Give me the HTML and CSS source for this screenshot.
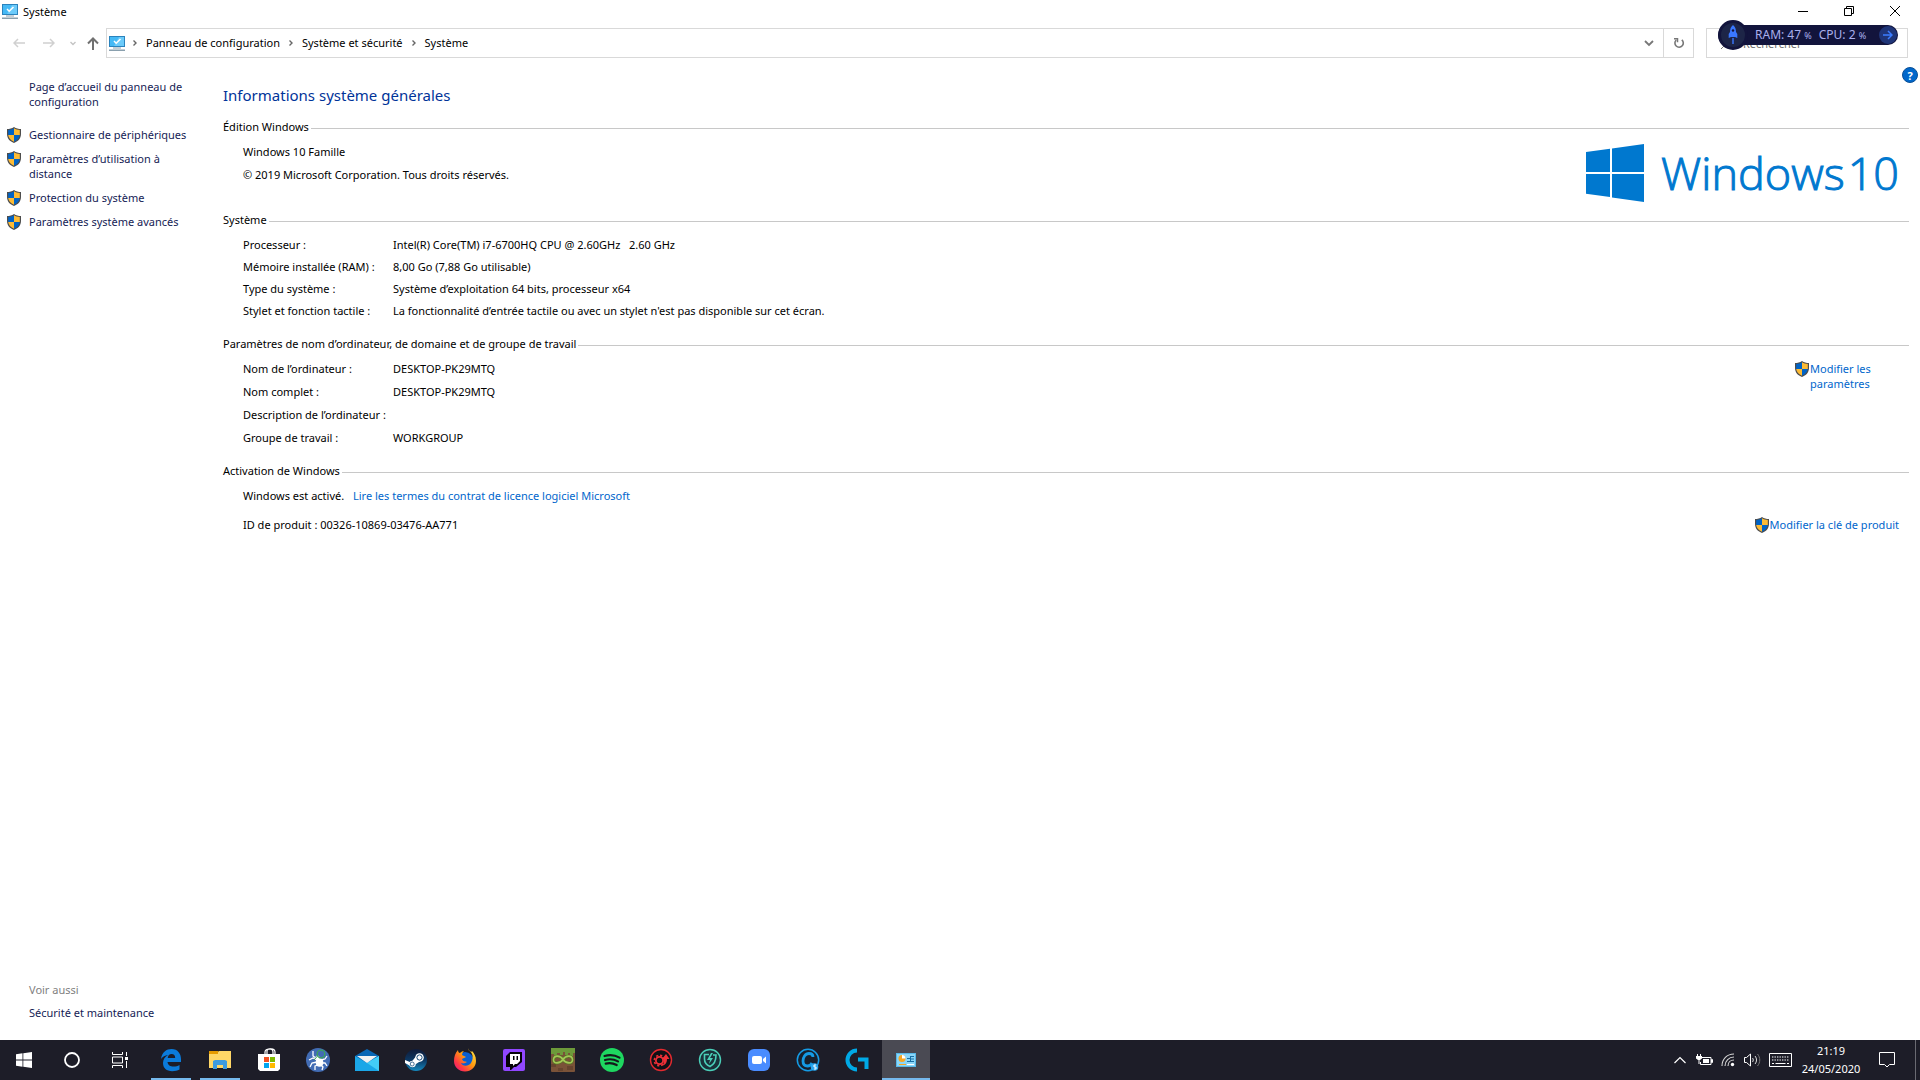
FILE: index.html
```html
<!DOCTYPE html>
<html lang="fr">
<head>
    <meta charset="UTF-8">
    <meta name="viewport" content="width=device-width, initial-scale=1.0">
    <title>Système</title>
    <link rel="stylesheet" href="styles.css">
</head>
<body>
    <!-- Shared icons -->
    <svg class="defs" aria-hidden="true">
        <symbol id="shield" viewBox="0 0 14 16">
            <path d="M7 0C5 1.600 2.500 2 0 2v5c0 4.500 3 7.500 7 9 4-1.500 7-4.500 7-9V2C11.500 2 9 1.600 7 0z" fill="#4d4d4d"/>
            <path d="M7 1.300C5.300 2.500 3.300 3 1.200 3v5H7z" fill="#0063c6"/>
            <path d="M7 1.300C8.700 2.500 10.700 3 12.800 3v5H7z" fill="#fdbb35"/>
            <path d="M1.200 8H7v6.700C3.800 13.300 1.500 11 1.200 8z" fill="#fdbb35"/>
            <path d="M12.800 8H7v6.700c3.200-1.400 5.500-3.700 5.800-6.700z" fill="#0063c6"/>
        </symbol>
        <symbol id="monitor" viewBox="0 0 16 15">
            <path d="M0 0h16v11H0z" fill="#2b83bd"/>
            <path d="M1 1h14v9H1z" fill="#45b9f5"/>
            <path d="M10 1h5v9H5z" fill="#6ccbfa"/>
            <path d="M5 5l2.200 2.200L11.500 3" fill="none" stroke="#fff" stroke-width="1.500"/>
            <path d="M4 11.500h8v1H4zM0 13.500h16V15H0z" fill="#8aa0ae"/>
        </symbol>
        <symbol id="chevron" viewBox="0 0 6 8">
            <path d="M1.500 1.500L4 4 1.500 6.500" fill="none" stroke="#666" stroke-width="1.400"/>
        </symbol>
    </svg>

    <header class="titlebar">
        <svg class="monitor"><use href="#monitor"/></svg>
        <span class="window-title">Système</span>
        <div class="window-buttons">
            <button aria-label="Réduire"><svg width="10" height="10" viewBox="0 0 10 10"><path d="M0 5.500h10" stroke="#000"/></svg></button>
            <button aria-label="Restaurer"><svg width="10" height="10" viewBox="0 0 10 10"><path d="M.5 2.500h7v7h-7zM2.500 2.500v-2h7v7h-2" fill="none" stroke="#000"/></svg></button>
            <button aria-label="Fermer"><svg width="10" height="10" viewBox="0 0 10 10"><path d="M0 0l10 10M10 0L0 10" stroke="#000"/></svg></button>
        </div>
    </header>

    <div class="toolbar">
        <div class="history">
            <button aria-label="Précédent" disabled><svg width="12" height="10" viewBox="0 0 12 10"><path d="M12 5H1M5 1L1 5l4 4" fill="none" stroke="#d0d0d0" stroke-width="1.500"/></svg></button>
            <button aria-label="Suivant" disabled><svg width="12" height="10" viewBox="0 0 12 10"><path d="M0 5h11M7 1l4 4-4 4" fill="none" stroke="#d0d0d0" stroke-width="1.500"/></svg></button>
            <button class="recent" aria-label="Emplacements récents" disabled><svg width="6" height="5" viewBox="0 0 6 5"><path d="M.5 1L3 3.500 5.500 1" fill="none" stroke="#c4c4c4" stroke-width="1.400"/></svg></button>
            <button class="up" aria-label="Dossier parent"><svg width="12" height="13" viewBox="0 0 12 13"><path d="M6 13V1.500M1 6.500l5-5 5 5" fill="none" stroke="#707070" stroke-width="2"/></svg></button>
        </div>
        <nav class="address">
            <svg class="monitor"><use href="#monitor"/></svg>
            <svg class="chevron"><use href="#chevron"/></svg>
            <a href="#">Panneau de configuration</a>
            <svg class="chevron"><use href="#chevron"/></svg>
            <a href="#">Système et sécurité</a>
            <svg class="chevron"><use href="#chevron"/></svg>
            <a href="#">Système</a>
            <button class="dropdown" aria-label="Adresses précédentes"><svg width="10" height="7" viewBox="0 0 10 7"><path d="M1 1l4 4 4-4" fill="none" stroke="#777" stroke-width="1.800"/></svg></button>
            <button class="refresh" aria-label="Actualiser"><svg width="12" height="12" viewBox="0 0 12 12"><path d="M3.200 3A4.200 4.200 0 1 0 8.800 2.800" fill="none" stroke="#777" stroke-width="1.600"/><path d="M1 1.700h3.500v3.500" fill="none" stroke="#777" stroke-width="1.500"/></svg></button>
        </nav>
        <div class="search">
            <svg width="12" height="12" viewBox="0 0 12 12"><circle cx="7" cy="5" r="4" fill="none" stroke="#777"/><path d="M4 8l-4 4" stroke="#777"/></svg>
            <input type="search" placeholder="Rechercher" aria-label="Rechercher">

            <!-- Memory widget floating over the search box -->
            <div class="booster">
                <span class="rocket">
                    <svg width="10" height="20" viewBox="0 0 10 20"><path d="M5 0C2.800 1.700 2 4 2 7L.7 9v4l2.300-1h4l2.300 1V9L8 7c0-3-.8-5.300-3-7zM4.300 13h1.400v6H4.300z" fill="#3a78ff"/><circle cx="5" cy="5.500" r="1.200" fill="#12143c"/></svg>
                </span>
                <span class="stats">RAM: 47 <small>%</small></span>
                <span class="stats">CPU: 2 <small>%</small></span>
                <button class="go" aria-label="Optimiser"><svg width="10" height="10" viewBox="0 0 10 10"><path d="M0 5h9M5 1l4 4-4 4" fill="none" stroke="#3d7dff" stroke-width="1.500"/></svg></button>
            </div>
        </div>
    </div>

    <div class="page">
        <aside class="sidebar">
            <ul class="tasks">
                <li><a href="#">Page d’accueil du panneau de configuration</a></li>
                <li><svg class="shield"><use href="#shield"/></svg><a href="#">Gestionnaire de périphériques</a></li>
                <li><svg class="shield"><use href="#shield"/></svg><a href="#">Paramètres d’utilisation à distance</a></li>
                <li><svg class="shield"><use href="#shield"/></svg><a href="#">Protection du système</a></li>
                <li><svg class="shield"><use href="#shield"/></svg><a href="#">Paramètres système avancés</a></li>
            </ul>
            <div class="see-also">
                <p>Voir aussi</p>
                <a href="#">Sécurité et maintenance</a>
            </div>
        </aside>

        <main class="content">
            <button class="help" aria-label="Aide">?</button>
            <h1>Informations système générales</h1>

            <section>
                <h2>Édition Windows</h2>
                <div class="group">
                    <div class="edition">
                        <p>Windows 10 Famille</p>
                        <p>© 2019 Microsoft Corporation. Tous droits réservés.</p>
                    </div>
                    <div class="win-logo">
                        <svg width="58" height="58" viewBox="0 0 58 58"><path d="M0 8l24-3.300V28H0zM26 4.400L58 0v28H26zM0 30h24v23L0 49.700zM26 30h32v28l-32-4.600z" fill="#0078cf"/></svg>
                        <span>Windows<b>10</b></span>
                    </div>
                </div>
            </section>

            <section>
                <h2>Système</h2>
                <div class="group">
                    <dl class="compact">
                        <dt>Processeur :</dt>
                        <dd>Intel(R) Core(TM) i7-6700HQ CPU @ 2.60GHz &nbsp; 2.60 GHz</dd>
                        <dt>Mémoire installée (RAM) :</dt>
                        <dd>8,00 Go (7,88 Go utilisable)</dd>
                        <dt>Type du système :</dt>
                        <dd>Système d’exploitation 64 bits, processeur x64</dd>
                        <dt>Stylet et fonction tactile :</dt>
                        <dd>La fonctionnalité d’entrée tactile ou avec un stylet n'est pas disponible sur cet écran.</dd>
                    </dl>
                </div>
            </section>

            <section>
                <h2>Paramètres de nom d’ordinateur, de domaine et de groupe de travail</h2>
                <div class="group">
                    <dl>
                        <dt>Nom de l’ordinateur :</dt>
                        <dd>DESKTOP-PK29MTQ</dd>
                        <dt>Nom complet :</dt>
                        <dd>DESKTOP-PK29MTQ</dd>
                        <dt>Description de l’ordinateur :</dt>
                        <dd></dd>
                        <dt>Groupe de travail :</dt>
                        <dd>WORKGROUP</dd>
                    </dl>
                    <a class="action action-narrow" href="#"><svg class="shield"><use href="#shield"/></svg><span>Modifier les paramètres</span></a>
                </div>
            </section>

            <section>
                <h2>Activation de Windows</h2>
                <div class="group activation">
                    <p>Windows est activé. <a href="#">Lire les termes du contrat de licence logiciel Microsoft</a></p>
                    <div class="product">
                        <p>ID de produit : 00326-10869-03476-AA771</p>
                        <a class="action" href="#"><svg class="shield"><use href="#shield"/></svg><span>Modifier la clé de produit</span></a>
                    </div>
                </div>
            </section>
        </main>
    </div>

    <footer class="taskbar">
        <div class="system">
            <button aria-label="Démarrer"><svg width="16" height="16" viewBox="0 0 16 16"><path d="M0 2.200L6.500 1.300V7.600H0zM7.300 1.200L16 0v7.600H7.300zM0 8.400h6.500v6.300L0 13.800zM7.300 8.400H16V16l-8.700-1.200z" fill="#fff"/></svg></button>
            <button aria-label="Cortana"><svg width="16" height="16" viewBox="0 0 16 16"><circle cx="8" cy="8" r="7" fill="none" stroke="#fff" stroke-width="1.800"/></svg></button>
            <button aria-label="Affichage des tâches"><svg width="16" height="16" viewBox="0 0 16 16"><path d="M.5 0v2.500h10V0M.5 16v-2.500h10V16M.5 5h10v6H.5zM14.500 0v4M14.500 9v7" fill="none" stroke="#fff"/><path d="M13 5h3v3h-3z" fill="#fff"/></svg></button>
        </div>
        <div class="apps">
            <button class="running" aria-label="Edge"><svg width="22" height="24" viewBox="0 0 22 24"><path d="M1 11C2 4 6.500 1 11.500 1 18 1 21 6 21 11v3H7.500c.3 3 2.800 4.600 6 4.600 2.200 0 4.300-.6 6-1.700v4.600c-2 1.100-4.500 1.700-7.300 1.700C6.500 23.200 3 20 3 15c0-3.500 2-6.500 5-8-3 .3-5.500 1.700-7 4zM7.700 9.900h7.500c0-2.400-1.300-3.900-3.600-3.900-2.200 0-3.600 1.700-3.900 3.900z" fill="#0b7bda"/></svg></button>
            <button class="running" aria-label="Explorateur de fichiers"><svg width="22" height="20" viewBox="0 0 22 20"><path d="M0 1h9l1 2H0z" fill="#e69b00"/><path d="M0 2h9l1-1h12v17H0z" fill="#ffd767"/><path d="M0 1h9v3H0z" fill="#e69b00"/><path d="M4 19v-8l2-1h10l2 1v8h-4v-4H8v4z" fill="#3d9be0"/></svg></button>
            <button aria-label="Microsoft Store"><svg width="24" height="24" viewBox="0 0 24 24"><path d="M8 8V4c0-4 8-4 8 0v4M10 6V3c0-3 8-3 8 1v3" fill="none" stroke="#fff" stroke-width="1.200"/><path d="M1 6h22v15l-2 2H3l-2-2z" fill="#fff"/><path d="M7 9h5v5H7z" fill="#f25022"/><path d="M13 9h5v5h-5z" fill="#7fba00"/><path d="M7 15h5v5H7z" fill="#00a4ef"/><path d="M13 15h5v5h-5z" fill="#ffb900"/></svg></button>
            <button aria-label="AdwCleaner"><svg width="24" height="24" viewBox="0 0 24 24"><circle cx="12" cy="12" r="12" fill="#426cb4"/><path d="M11 12L7 10 3 12M11 14l-5 1-2 4M12 17l-3 1v4M15 17l2 2-1 3M16 15l3 0 2 3M15 12l4-1 2-3M10 10L7 8V3" fill="none" stroke="#fff" stroke-width="1.300"/><ellipse cx="13.500" cy="14.500" rx="3.800" ry="4.200" fill="#fff"/><circle cx="11.500" cy="9.500" r="2" fill="#fff"/><circle cx="15" cy="6" r="3.800" fill="none" stroke="#3ca35c" stroke-width="1.300"/><path d="M11.500 8L8 12" stroke="#3ca35c"/></svg></button>
            <button aria-label="Courrier"><svg width="24" height="22" viewBox="0 0 24 22"><path d="M0 7l12-7 12 7v15H0z" fill="#0a67b5"/><path d="M0 7l12 7L24 7v15H0z" fill="#1ba7e8"/><path d="M24 7v15L12 14z" fill="#43cdf7"/><path d="M2 7h20l-10 7z" fill="#f2f2f2"/></svg></button>
            <button aria-label="Steam"><svg width="24" height="24" viewBox="0 0 24 24"><defs><linearGradient id="steam" x2="0" y2="1"><stop offset="0" stop-color="#101b38"/><stop offset=".5" stop-color="#0c3762"/><stop offset="1" stop-color="#1589bf"/></linearGradient></defs><circle cx="12" cy="12" r="11" fill="url(#steam)"/><path d="M1 12l6 2.500 4.500-5.500 5 4-6 4-5 .5L1 15z" fill="#fff"/><circle cx="15.500" cy="9.500" r="4.300" fill="#fff"/><circle cx="15.500" cy="9.500" r="2.600" fill="#fff" stroke="#164a78"/><circle cx="8.500" cy="16" r="3.200" fill="#fff"/><circle cx="8.200" cy="16" r="2" fill="none" stroke="#164a78" stroke-width=".8"/></svg></button>
            <button aria-label="Firefox"><svg width="24" height="24" viewBox="0 0 24 24"><defs><linearGradient id="fox" x1="1" x2="0" y2="1"><stop offset="0" stop-color="#fff44f"/><stop offset=".45" stop-color="#ff980e"/><stop offset=".75" stop-color="#ff3647"/><stop offset="1" stop-color="#e31587"/></linearGradient></defs><circle cx="12" cy="13" r="9" fill="#0a5fd0"/><path d="M15 0c0 3 3 3 4 6 1 2 1 6-1 9-3 4-9 3-10 0 3 1 4 0 6-1-2-1-4 0-5-3 1-1 3-1 4-2-1-1-3-1-4-2 0-2 1-3 2-4-2 0-3 1-4 2-1 0-2-1-2-3-3 3-4 7-4 11 0 6 5 10.500 11 10.500S23 19 23 13c0-5-2-8-4-10 0 2-4-1-4-3z" fill="url(#fox)"/></svg></button>
            <button aria-label="Twitch"><svg width="22" height="22" viewBox="0 0 22 22"><rect width="22" height="22" rx="2" fill="#9147ff"/><path d="M3 7l4-4h12v10l-6 5h-2l-3 3H7v-3H3z" fill="#050308"/><path d="M7 5h10v7l-3 3h-2l-2 2v-2H7z" fill="#fff"/><path d="M10 7h1.500v4H10zM13.500 7H15v4h-1.500z" fill="#050308"/></svg></button>
            <button aria-label="MCreator"><svg width="24" height="24" viewBox="0 0 24 24"><rect width="24" height="24" rx="1" fill="#7a5238"/><path d="M0 0h24v5h-2v3h-3V5h-2v2h-3V4h-2v3H9V5H6v4H3V6H0z" fill="#6d9a3a"/><path d="M0 16h5v3H0zM16 18h6v4h-6zM7 20h5v3H7z" fill="#67442f"/><path d="M12 11.500C9 7 3 7 2.500 11.500S9 16 12 11.500s9-4.500 9.500 0S15 16 12 11.500z" fill="none" stroke="#527525" stroke-width="3"/><path d="M12 11.500C9 7 3 7 2.500 11.500S9 16 12 11.500s9-4.500 9.500 0S15 16 12 11.500z" fill="none" stroke="#a4c655" stroke-width="1.600"/></svg></button>
            <button aria-label="Spotify"><svg width="24" height="24" viewBox="0 0 24 24"><circle cx="12" cy="12" r="12" fill="#1ed760"/><path d="M4.500 8c5-1.500 10.500-1 15 1.600M5 12c4.500-1.300 9-.8 13 1.400M5.700 15.600c4-1 7.500-.5 11 1.400" fill="none" stroke="#14181b" stroke-width="2.200" stroke-linecap="round"/></svg></button>
            <button aria-label="Driver Booster"><svg width="24" height="24" viewBox="0 0 24 24"><circle cx="12" cy="12" r="10.500" fill="#111116" stroke="#e22a2f" stroke-width="1.400"/><circle cx="10.500" cy="12.500" r="3.600" fill="none" stroke="#ee3037" stroke-width="1.800"/><circle cx="10.500" cy="12.500" r="5.200" fill="none" stroke="#ee3037" stroke-width="1.600" stroke-dasharray="2.200 1.880"/><path d="M17 6l3.500 5H18c0 4-2 6-5 7 2-2 2-4 1.500-7H13z" fill="#ee3037"/></svg></button>
            <button aria-label="Advanced SystemCare"><svg width="24" height="24" viewBox="0 0 24 24"><circle cx="12" cy="12" r="10.500" fill="#19313a" stroke="#4bceb8" stroke-width="1.400"/><path d="M11 6.500H6.500V11c0 4 2 6 5.500 7.500 4-2 6-5 6-11.500h-3" fill="none" stroke="#4bceb8" stroke-width="1.600"/><path d="M13 5l-4 7h3l-1 4 4-6h-3l3-5z" fill="#4bceb8"/></svg></button>
            <button aria-label="Zoom"><svg width="24" height="24" viewBox="0 0 24 24"><rect x="1" y="1" width="22" height="22" rx="6" fill="#4a8cff"/><rect x="5" y="8" width="10" height="8" rx="2" fill="#fff"/><path d="M16 11l3-2.500v7L16 13z" fill="#fff"/></svg></button>
            <button aria-label="Ccleaner"><svg width="24" height="24" viewBox="0 0 24 24"><circle cx="12" cy="12" r="10.700" fill="#17212e" stroke="#159be5" stroke-width="1.500"/><path d="M17 9c0-3-2-3.500-4-3.500-4 0-6 4-6 7.500s2 5 4.500 5c2 0 3.500-1 4.500-3" fill="none" stroke="#159be5" stroke-width="2.800"/><circle cx="18.500" cy="19" r="3.800" fill="#2ba8f0"/><path d="M20 17h-2v2h2v2h-2" fill="none" stroke="#fff"/></svg></button>
            <button aria-label="Logitech G HUB"><svg width="24" height="24" viewBox="0 0 24 24"><path d="M12 2.500C6.500 2.500 2.500 7 2.500 12s4 9.500 9.500 9.500M13 11.500h8.500V21" fill="none" stroke="#00a9e6" stroke-width="4"/></svg></button>
            <button class="active" aria-label="Panneau de configuration"><svg width="20" height="16" viewBox="0 0 20 16"><rect y="1" width="20" height="14" fill="#58b8e8"/><path d="M1 2h18v12H1z" fill="#8ad6f8"/><circle cx="6" cy="6.500" r="3.500" fill="#f6a623"/><path d="M6 6.500V3a3.500 3.500 0 0 1 3.500 3.500z" fill="#fff"/><path d="M11 6.500h3M11 9.500h3M15 4.500h3M15 7h3M15 9.500h3M14.500 4v6" stroke="#176fa5"/><path d="M3 12.500h7" stroke="#f6a623"/><path d="M11 12.500h7" stroke="#fff"/></svg></button>
        </div>
        <div class="tray">
            <button aria-label="Afficher les icônes cachées"><svg width="12" height="8" viewBox="0 0 12 8"><path d="M.5 7L6 1.500 11.500 7" fill="none" stroke="#fff" stroke-width="1.200"/></svg></button>
            <button aria-label="Batterie"><svg width="17" height="12" viewBox="0 0 17 12"><path d="M6 3.500h9v7H4.500V8M15.500 5.500v3h1v-3z" fill="none" stroke="#fff"/><path d="M7 5h6v4H7zM0 2h6v2.500L4 6H2L0 4.500zM1 0h1v2H1zM4 0h1v2H4zM2.500 6h1v4h-1z" fill="#fff"/></svg></button>
            <button aria-label="Réseau"><svg width="14" height="14" viewBox="0 0 14 14"><path d="M1 13C1 6 6 1 13 1M4 13c0-5 4-9 9-9M7 13c0-3.500 2.500-6 6-6" fill="none" stroke="#d6d6d6" stroke-width="1.100"/><circle cx="11.500" cy="11.500" r="1.700" fill="#fff"/></svg></button>
            <button aria-label="Volume"><svg width="17" height="14" viewBox="0 0 17 14"><path d="M.5 4.500h2L6.500 1v12L2.500 9.500h-2z" fill="none" stroke="#fff"/><path d="M8.500 5c1 1.200 1 2.800 0 4M11 3c2 2.500 2 5.500 0 8" fill="none" stroke="#ddd"/><path d="M13.500 1c3 3.500 3 8.500 0 12" fill="none" stroke="#777"/></svg></button>
            <button class="keyboard" aria-label="Clavier tactile"><svg width="23" height="14" viewBox="0 0 23 14"><path d="M.5.5h22v13H.5z" fill="none" stroke="#fff"/><path d="M3 4h17M3 7h17" stroke="#fff" stroke-width="1.200" stroke-dasharray="1.400 1.100"/><path d="M3 10.500h2M6.500 10.500h10M18 10.500h2" stroke="#fff" stroke-width="1.200"/></svg></button>
            <div class="clock"><time>21:19</time><time>24/05/2020</time></div>
            <button class="notifications" aria-label="Notifications"><svg width="16" height="16" viewBox="0 0 16 16"><path d="M.5.5h15v12h-5L8 15l-2.500-2.500h-5z" fill="none" stroke="#fff"/></svg></button>
            <button class="show-desktop" aria-label="Afficher le bureau"></button>
        </div>
    </footer>
</body>
</html>
```
FILE: styles.css
```css
* {
    box-sizing: border-box;
}
body {
    margin: 0;
    min-height: 100vh;
    display: flex;
    flex-direction: column;
    background-color: #fff;
    color: #000;
    font-family: "Noto Sans", "Open Sans", sans-serif;
    font-size: 11px;
    line-height: 15px;
}
h1, h2, p, ul, dl, dd {
    margin: 0;
    padding: 0;
    font-weight: normal;
}
button {
    display: flex;
    align-items: center;
    justify-content: center;
    margin: 0;
    padding: 0;
    border: none;
    background: none;
    font: inherit;
}
a {
    color: #0066cc;
    text-decoration: none;
}
a:hover {
    text-decoration: underline;
}
svg {
    flex-shrink: 0;
}
.defs {
    position: absolute;
    width: 0;
    height: 0;
}
.monitor {
    width: 16px;
    height: 15px;
}
.shield {
    width: 14px;
    height: 16px;
    margin-bottom: -1px;
}
.chevron {
    width: 6px;
    height: 8px;
}

/* Title bar */
.titlebar {
    display: flex;
    align-items: center;
    height: 22px;
    padding-left: 2px;
}
.window-title {
    margin-left: 5px;
}
.window-buttons {
    display: flex;
    margin-left: auto;
    margin-right: 2px;
}
.window-buttons button {
    width: 46px;
    height: 20px;
}

/* Address bar */
.toolbar {
    display: flex;
    padding: 6px 12px 2px 0;
}
.history {
    display: flex;
    width: 106px;
    padding-left: 4px;
}
.history button {
    width: 30px;
}
.history .recent {
    width: 17px;
}
.history .up {
    width: 24px;
}
.address {
    flex: 1;
    display: flex;
    align-items: center;
    height: 30px;
    padding-left: 2px;
    border: 1px solid #d9d9d9;
}
.address .monitor {
    margin-right: -1px;
}
.address .chevron {
    margin: 0 8px;
}
.address a {
    padding-bottom: 1px;
    color: #000;
}
.dropdown {
    width: 28px;
    height: 28px;
    margin-left: auto;
}
.refresh {
    width: 30px;
    height: 28px;
    border-left: 1px solid #d9d9d9;
}
.search {
    position: relative;
    display: flex;
    align-items: center;
    gap: 10px;
    width: 202px;
    height: 30px;
    margin-left: 12px;
    padding-left: 14px;
    border: 1px solid #d9d9d9;
}
.search input {
    flex: 1;
    min-width: 0;
    padding: 0;
    border: none;
    outline: none;
    background: none;
    font: inherit;
}
.search input::placeholder {
    color: #6d6d6d;
}

/* Memory widget */
.booster {
    position: absolute;
    top: -4px;
    right: 9px;
    display: flex;
    align-items: center;
    gap: 7px;
    width: 180px;
    height: 20px;
    padding-right: 1px;
    border-radius: 10px;
    background-color: #12143c;
    color: #a9b0ec;
    font-size: 12px;
    white-space: nowrap;
}
.rocket {
    display: flex;
    align-items: center;
    justify-content: center;
    width: 30px;
    height: 30px;
    border: 3px solid #12143c;
    border-radius: 50%;
    background-color: #1d2547;
}
.booster small {
    font-size: 9px;
}
.go {
    width: 18px;
    height: 18px;
    margin-left: auto;
    border-radius: 50%;
    background-color: #1f3578;
}

/* Page */
.page {
    flex: 1;
    display: flex;
}
.sidebar {
    display: flex;
    flex-direction: column;
    justify-content: space-between;
    width: 223px;
    padding: 19px 25px 20px 7px;
}
.tasks {
    display: flex;
    flex-direction: column;
    gap: 9px;
    list-style: none;
}
.tasks li {
    display: flex;
    gap: 8px;
}
.tasks li:first-child {
    padding-left: 22px;
    margin-bottom: 9px;
}
.sidebar a {
    color: #151c55;
}
.see-also {
    padding-left: 22px;
}
.see-also p {
    margin-bottom: 8px;
    color: #808080;
}
.content {
    position: relative;
    flex: 1;
    padding: 23px 11px 20px 0;
}
.help {
    position: absolute;
    top: 7px;
    right: 2px;
    width: 16px;
    height: 16px;
    border: 1px solid #0a4f96;
    border-radius: 50%;
    background-color: #0067cb;
    color: #fff;
    font-weight: bold;
}
h1 {
    margin-bottom: 10px;
    color: #003399;
    font-size: 15px;
    line-height: 24px;
}
h2 {
    display: flex;
    align-items: center;
    gap: 2px;
    margin-bottom: 3px;
    font-size: 11px;
    line-height: 20px;
}
h2::after {
    content: "";
    flex: 1;
    height: 1px;
    margin-top: 2px;
    background-color: #c8c8c8;
}
section {
    margin-bottom: 12px;
}
.group {
    display: flex;
    justify-content: space-between;
    padding: 0 10px 0 20px;
    line-height: 23px;
}
.win-logo {
    display: flex;
    align-items: center;
    gap: 17px;
    margin: 4px 0 -4px;
    color: #0078cf;
    font-family: "Open Sans", "Noto Sans", sans-serif;
    font-size: 45px;
    font-weight: 300;
    line-height: 58px;
    -webkit-text-stroke: 1px #0078cf;
}
.win-logo b {
    margin-left: 3px;
    font-weight: 300;
}
dl {
    display: grid;
    grid-template-columns: 150px auto;
    grid-auto-rows: 23px;
}
.compact {
    grid-auto-rows: 22px;
    padding-top: 1px;
    line-height: 22px;
}
.action {
    display: flex;
    gap: 1px;
    line-height: 15px;
}
.action-narrow {
    width: 104px;
    padding: 4px 20px 0 0;
}
.activation {
    flex-direction: column;
    gap: 6px;
}
.activation p a {
    margin-left: 6px;
}
.product {
    display: flex;
    align-items: center;
    justify-content: space-between;
}

/* Taskbar */
.taskbar {
    display: flex;
    height: 40px;
    background-color: #1d1d28;
    color: #fff;
}
.system {
    display: flex;
    margin-right: 3px;
}
.system button {
    width: 48px;
}
.apps {
    display: flex;
    gap: 1px;
}
.apps button {
    position: relative;
    width: 48px;
}
.apps .running::after, .apps .active::after {
    content: "";
    position: absolute;
    bottom: 0;
    left: 4px;
    right: 4px;
    height: 2px;
    background-color: #76b9ed;
}
.apps .active {
    background-color: #4a4a53;
}
.apps .active::after {
    left: 0;
    right: 0;
}
.tray {
    display: flex;
    margin-left: auto;
}
.tray button {
    width: 24px;
}
.tray .keyboard {
    width: 32px;
}
.clock {
    display: flex;
    flex-direction: column;
    justify-content: center;
    width: 64px;
    margin-left: 3px;
    line-height: 18px;
    text-align: center;
}
.tray .notifications {
    width: 48px;
    margin-right: 4px;
}
.tray .show-desktop {
    width: 5px;
    border-left: 1px solid #6a6a72;
}
```
